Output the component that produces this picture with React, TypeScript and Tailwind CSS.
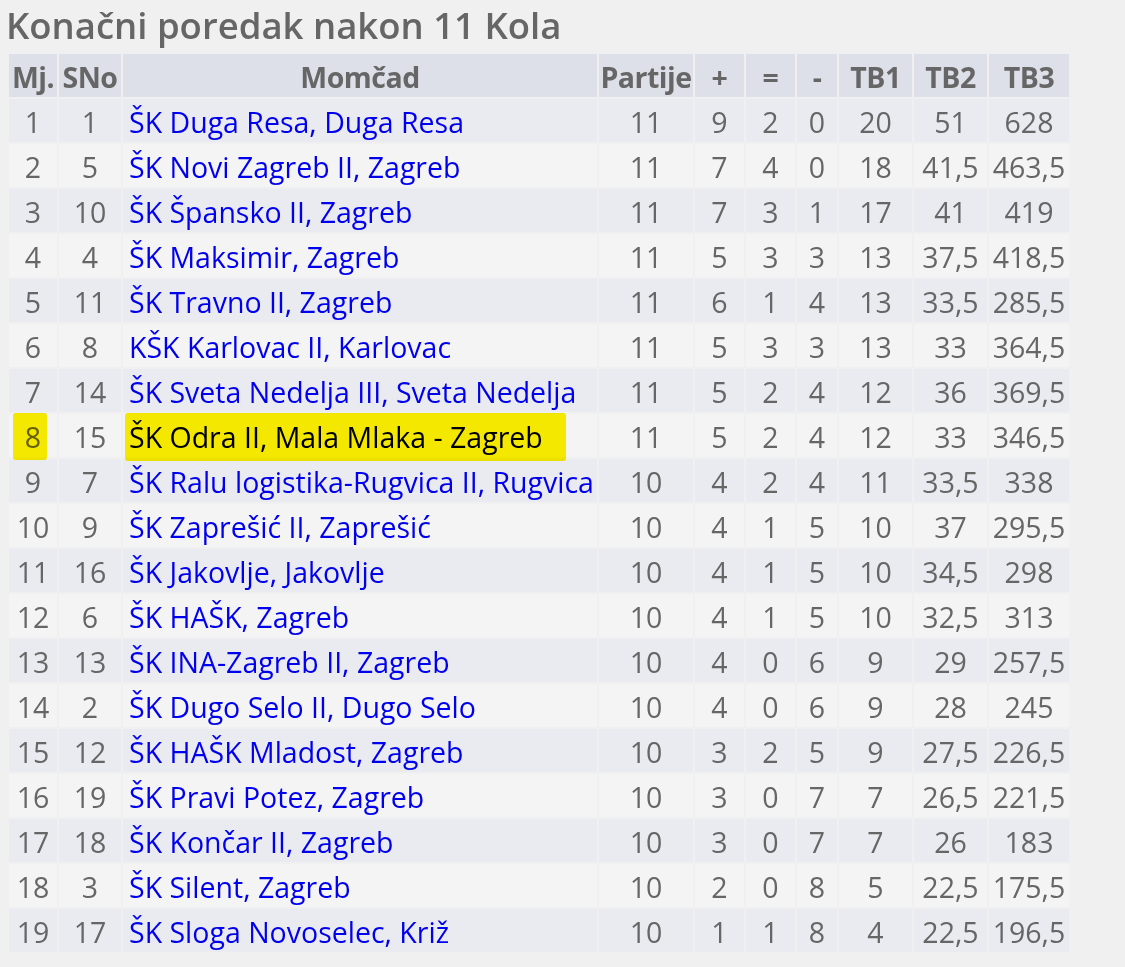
import React from 'react'

type Row = {
  mj: number
  sno: number
  team: string
  partije: number
  plus: number
  eq: number
  minus: number
  tb1: string
  tb2: string
  tb3: string
  mark?: boolean
}

const rows: Row[] = [
  { mj: 1, sno: 1, team: 'ŠK Duga Resa, Duga Resa', partije: 11, plus: 9, eq: 2, minus: 0, tb1: '20', tb2: '51', tb3: '628' },
  { mj: 2, sno: 5, team: 'ŠK Novi Zagreb II, Zagreb', partije: 11, plus: 7, eq: 4, minus: 0, tb1: '18', tb2: '41,5', tb3: '463,5' },
  { mj: 3, sno: 10, team: 'ŠK Špansko II, Zagreb', partije: 11, plus: 7, eq: 3, minus: 1, tb1: '17', tb2: '41', tb3: '419' },
  { mj: 4, sno: 4, team: 'ŠK Maksimir, Zagreb', partije: 11, plus: 5, eq: 3, minus: 3, tb1: '13', tb2: '37,5', tb3: '418,5' },
  { mj: 5, sno: 11, team: 'ŠK Travno II, Zagreb', partije: 11, plus: 6, eq: 1, minus: 4, tb1: '13', tb2: '33,5', tb3: '285,5' },
  { mj: 6, sno: 8, team: 'KŠK Karlovac II, Karlovac', partije: 11, plus: 5, eq: 3, minus: 3, tb1: '13', tb2: '33', tb3: '364,5' },
  { mj: 7, sno: 14, team: 'ŠK Sveta Nedelja III, Sveta Nedelja', partije: 11, plus: 5, eq: 2, minus: 4, tb1: '12', tb2: '36', tb3: '369,5' },
  { mj: 8, sno: 15, team: 'ŠK Odra II, Mala Mlaka - Zagreb', partije: 11, plus: 5, eq: 2, minus: 4, tb1: '12', tb2: '33', tb3: '346,5', mark: true },
  { mj: 9, sno: 7, team: 'ŠK Ralu logistika-Rugvica II, Rugvica', partije: 10, plus: 4, eq: 2, minus: 4, tb1: '11', tb2: '33,5', tb3: '338' },
  { mj: 10, sno: 9, team: 'ŠK Zaprešić II, Zaprešić', partije: 10, plus: 4, eq: 1, minus: 5, tb1: '10', tb2: '37', tb3: '295,5' },
  { mj: 11, sno: 16, team: 'ŠK Jakovlje, Jakovlje', partije: 10, plus: 4, eq: 1, minus: 5, tb1: '10', tb2: '34,5', tb3: '298' },
  { mj: 12, sno: 6, team: 'ŠK HAŠK, Zagreb', partije: 10, plus: 4, eq: 1, minus: 5, tb1: '10', tb2: '32,5', tb3: '313' },
  { mj: 13, sno: 13, team: 'ŠK INA-Zagreb II, Zagreb', partije: 10, plus: 4, eq: 0, minus: 6, tb1: '9', tb2: '29', tb3: '257,5' },
  { mj: 14, sno: 2, team: 'ŠK Dugo Selo II, Dugo Selo', partije: 10, plus: 4, eq: 0, minus: 6, tb1: '9', tb2: '28', tb3: '245' },
  { mj: 15, sno: 12, team: 'ŠK HAŠK Mladost, Zagreb', partije: 10, plus: 3, eq: 2, minus: 5, tb1: '9', tb2: '27,5', tb3: '226,5' },
  { mj: 16, sno: 19, team: 'ŠK Pravi Potez, Zagreb', partije: 10, plus: 3, eq: 0, minus: 7, tb1: '7', tb2: '26,5', tb3: '221,5' },
  { mj: 17, sno: 18, team: 'ŠK Končar II, Zagreb', partije: 10, plus: 3, eq: 0, minus: 7, tb1: '7', tb2: '26', tb3: '183' },
  { mj: 18, sno: 3, team: 'ŠK Silent, Zagreb', partije: 10, plus: 2, eq: 0, minus: 8, tb1: '5', tb2: '22,5', tb3: '175,5' },
  { mj: 19, sno: 17, team: 'ŠK Sloga Novoselec, Križ', partije: 10, plus: 1, eq: 1, minus: 8, tb1: '4', tb2: '22,5', tb3: '196,5' },
]

const headers = ['Mj.', 'SNo', 'Momčad', 'Partije', '+', '=', '-', 'TB1', 'TB2', 'TB3']

// highlighter stroke, multiplied over the cell so text keeps its ink
const Marker = ({ className }: { className: string }) => (
  <span className={`pointer-events-none absolute bg-[#fff200] mix-blend-multiply rounded-[3px] ${className}`} />
)

const cell = 'p-0 pt-[4px] h-[43px] leading-[39px] text-center'

export default function App() {
  return (
    <div className="min-h-screen bg-[#f0f0f0] font-['Open_Sans',sans-serif] text-[#666]">
      <div className="h-[52px] pl-[6px] pt-[1px] text-[36.5px] font-semibold leading-[48px] text-[#666]">
        Konačni poredak nakon 11 Kola
      </div>
      <table className="ml-[7px] table-fixed border-separate border-spacing-[2px] text-[28.5px]">
        <colgroup>
          <col className="w-[48px]" />
          <col className="w-[62px]" />
          <col className="w-[474px]" />
          <col className="w-[94px]" />
          <col className="w-[49px]" />
          <col className="w-[49px]" />
          <col className="w-[40px]" />
          <col className="w-[73px]" />
          <col className="w-[73px]" />
          <col className="w-[80px]" />
        </colgroup>
        <thead>
          <tr className="bg-[#dde0e8]">
            {headers.map((h) => (
              <th key={h} className={`${cell} font-bold tracking-[-0.5px] text-[#666] whitespace-nowrap`}>
                {h}
              </th>
            ))}
          </tr>
        </thead>
        <tbody>
          {rows.map((r, i) => (
            <tr key={r.mj} className={i % 2 === 0 ? 'bg-[#eaebf0]' : 'bg-[#f4f4f4]'}>
              <td className={`${cell} relative`}>
                {r.mark && <Marker className="left-[4px] top-[-1px] h-[47px] w-[34px]" />}
                {r.mj}
              </td>
              <td className={cell}>{r.sno}</td>
              <td className={`${cell} relative whitespace-nowrap pl-[6px] !text-left`}>
                {r.mark && <Marker className="left-[2px] top-[-1px] h-[48px] w-[441px]" />}
                <a href="#" className="text-[#0000ee] no-underline">
                  {r.team}
                </a>
              </td>
              <td className={cell}>{r.partije}</td>
              <td className={cell}>{r.plus}</td>
              <td className={cell}>{r.eq}</td>
              <td className={cell}>{r.minus}</td>
              <td className={cell}>{r.tb1}</td>
              <td className={cell}>{r.tb2}</td>
              <td className={`${cell} whitespace-nowrap`}>{r.tb3}</td>
            </tr>
          ))}
        </tbody>
      </table>
    </div>
  )
}
